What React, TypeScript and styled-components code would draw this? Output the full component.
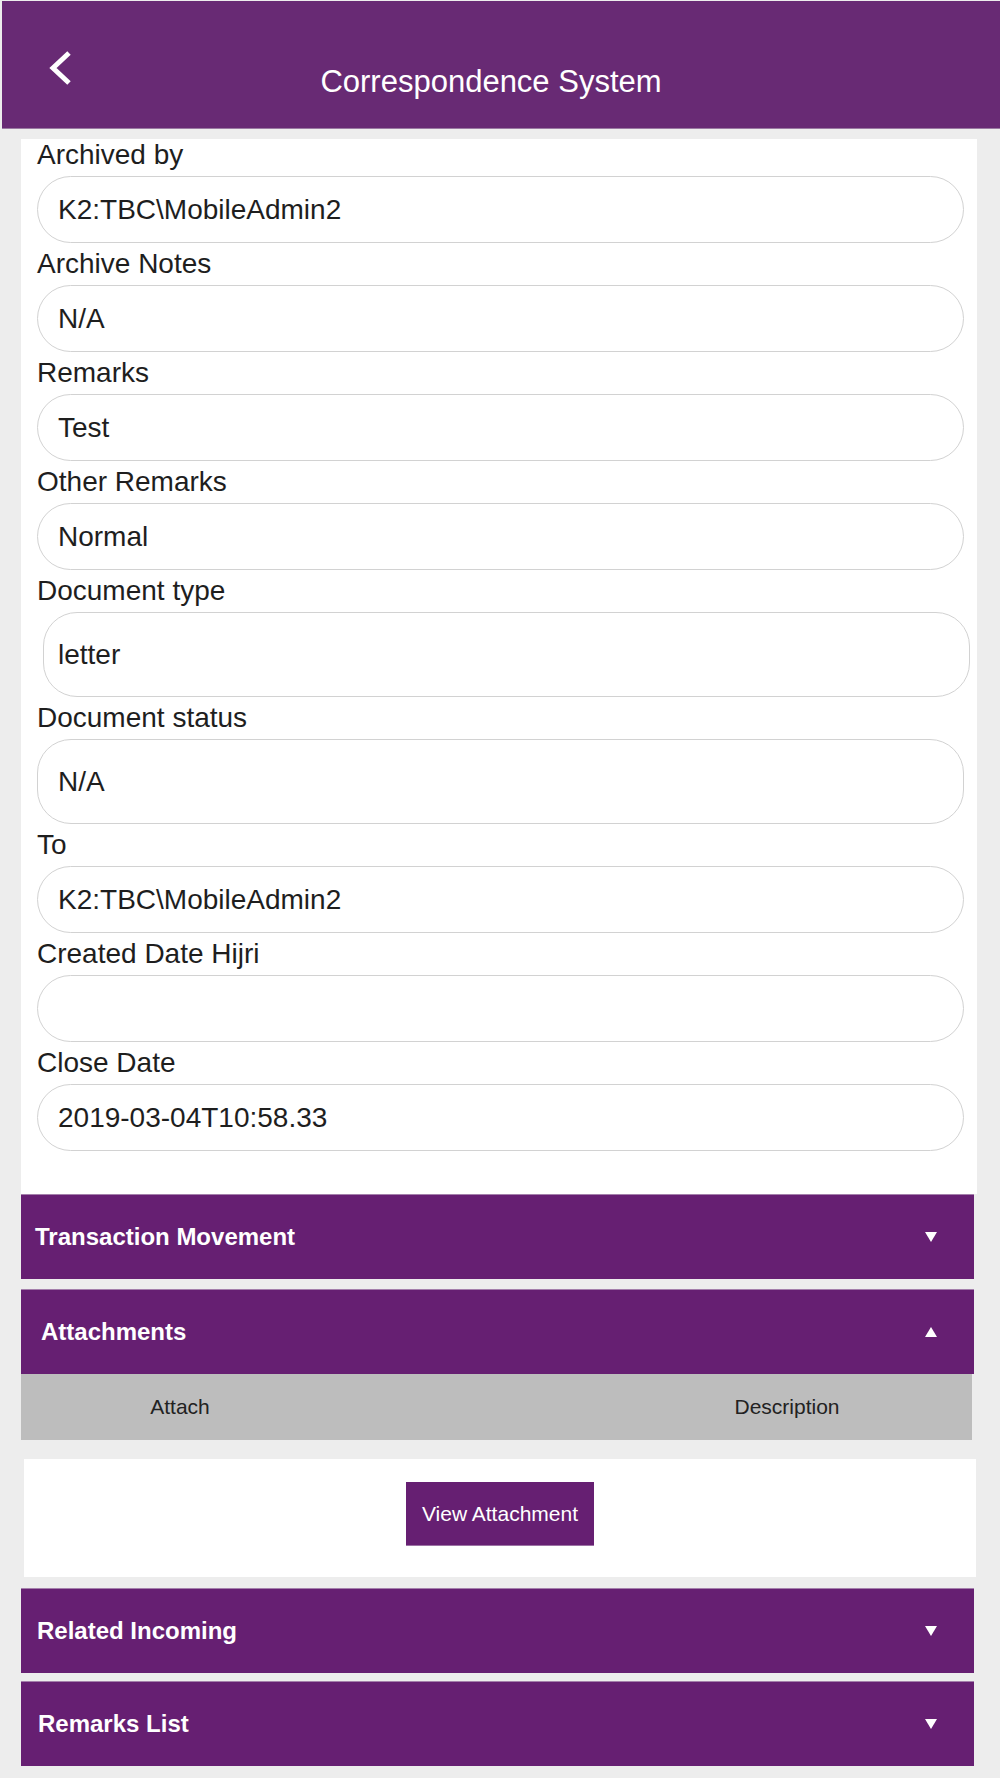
import React from 'react'
import styled, { createGlobalStyle } from 'styled-components'

const GlobalStyle = createGlobalStyle`
  html, body {
    margin: 0;
    padding: 0;
    background: #ededed;
    font-family: "Liberation Sans", Arial, Helvetica, sans-serif;
  }
`

const Page = styled.div`
  width: 1000px;
  min-height: 1778px;
  background: #ededed;
  padding-top: 1px;
  box-sizing: border-box;
`

const Header = styled.header`
  display: flex;
  align-items: flex-start;
  height: 128px;
  margin-left: 2px;
  padding: 50px 0 0 46px;
  box-sizing: border-box;
  background: #682a74;
  border-bottom: 1px solid #9a7aa2;
`

const BackButton = styled.button`
  display: flex;
  width: 26px;
  height: 34px;
  padding: 0;
  border: none;
  background: transparent;
  cursor: pointer;
`

const Title = styled.h1`
  flex: 1;
  margin: 13px 0 0;
  padding-right: 92px;
  text-align: center;
  color: #ffffff;
  font-size: 31px;
  font-weight: normal;
  line-height: 36px;
`

const Card = styled.section`
  display: flex;
  flex-direction: column;
  gap: 5px;
  margin: 10px 23px 0 21px;
  padding: 0 13px 43px 16px;
  background: #ffffff;
`

const Field = styled.div`
  display: flex;
  flex-direction: column;
`

const Label = styled.label`
  color: #1e1e1e;
  font-size: 28px;
  line-height: 32px;
  margin-bottom: 5px;
`

const Input = styled.div<{ $tall?: boolean; $shift?: number }>`
  display: flex;
  align-items: center;
  height: ${(p) => (p.$tall ? 85 : 67)}px;
  margin-left: ${(p) => p.$shift || 0}px;
  margin-right: ${(p) => -(p.$shift || 0)}px;
  padding: 0 20px 0 ${(p) => 20 - (p.$shift || 0)}px;
  box-sizing: border-box;
  border: 1px solid #d2d2d2;
  border-radius: 34px;
  color: #1e1e1e;
  font-size: 28px;
`

const Bar = styled.div<{ $indent: number; $top: number }>`
  display: flex;
  align-items: center;
  justify-content: space-between;
  height: 85px;
  margin: ${(p) => p.$top}px 26px 0 21px;
  padding: 0 37px 0 ${(p) => p.$indent}px;
  box-sizing: border-box;
  background: #661f72;
  border-top: 1px solid #a47fab;
  color: #ffffff;
  font-size: 24px;
  font-weight: bold;
`

const Arrow = styled.span<{ $up?: boolean }>`
  width: 0;
  height: 0;
  border-left: 6px solid transparent;
  border-right: 6px solid transparent;
  ${(p) => (p.$up ? 'border-bottom' : 'border-top')}: 10px solid #ffffff;
`

const TableHead = styled.div`
  display: grid;
  grid-template-columns: 318px 1fr 370px;
  align-items: center;
  height: 66px;
  margin: 0 28px 0 21px;
  background: #bdbdbd;
  color: #222222;
  font-size: 21px;
`

const HeadCell = styled.span`
  text-align: center;
`

const AttachmentBox = styled.div`
  display: flex;
  justify-content: center;
  margin: 19px 24px 0 24px;
  padding: 23px 0 31px;
  background: #ffffff;
`

const ViewButton = styled.button`
  width: 188px;
  height: 64px;
  padding: 0;
  border: none;
  border-bottom: 1px solid #9c72a4;
  background: #661f72;
  color: #ffffff;
  font-family: inherit;
  font-size: 21px;
  cursor: pointer;
`

const fields = [
  { label: 'Archived by', value: 'K2:TBC\\MobileAdmin2' },
  { label: 'Archive Notes', value: 'N/A' },
  { label: 'Remarks', value: 'Test' },
  { label: 'Other Remarks', value: 'Normal' },
  { label: 'Document type', value: 'letter', tall: true, shift: 6 },
  { label: 'Document status', value: 'N/A', tall: true },
  { label: 'To', value: 'K2:TBC\\MobileAdmin2' },
  { label: 'Created Date Hijri', value: '' },
  { label: 'Close Date', value: '2019-03-04T10:58.33' },
]

export default function App() {
  return (
    <Page>
      <GlobalStyle />
      <Header>
        <BackButton aria-label="Back">
          <svg width="26" height="34" viewBox="0 0 26 34">
            <path d="M21 2 L5 17 L21 32" fill="none" stroke="#ffffff" strokeWidth="5" />
          </svg>
        </BackButton>
        <Title>Correspondence System</Title>
      </Header>

      <Card>
        {fields.map((f) => (
          <Field key={f.label}>
            <Label>{f.label}</Label>
            <Input $tall={f.tall} $shift={f.shift}>{f.value}</Input>
          </Field>
        ))}
      </Card>

      <Bar $indent={14} $top={0}>
        Transaction Movement
        <Arrow />
      </Bar>
      <Bar $indent={20} $top={10}>
        Attachments
        <Arrow $up />
      </Bar>
      <TableHead>
        <HeadCell>Attach</HeadCell>
        <span />
        <HeadCell>Description</HeadCell>
      </TableHead>
      <AttachmentBox>
        <ViewButton>View Attachment</ViewButton>
      </AttachmentBox>
      <Bar $indent={16} $top={11}>
        Related Incoming
        <Arrow />
      </Bar>
      <Bar $indent={17} $top={8}>
        Remarks List
        <Arrow />
      </Bar>
    </Page>
  )
}
